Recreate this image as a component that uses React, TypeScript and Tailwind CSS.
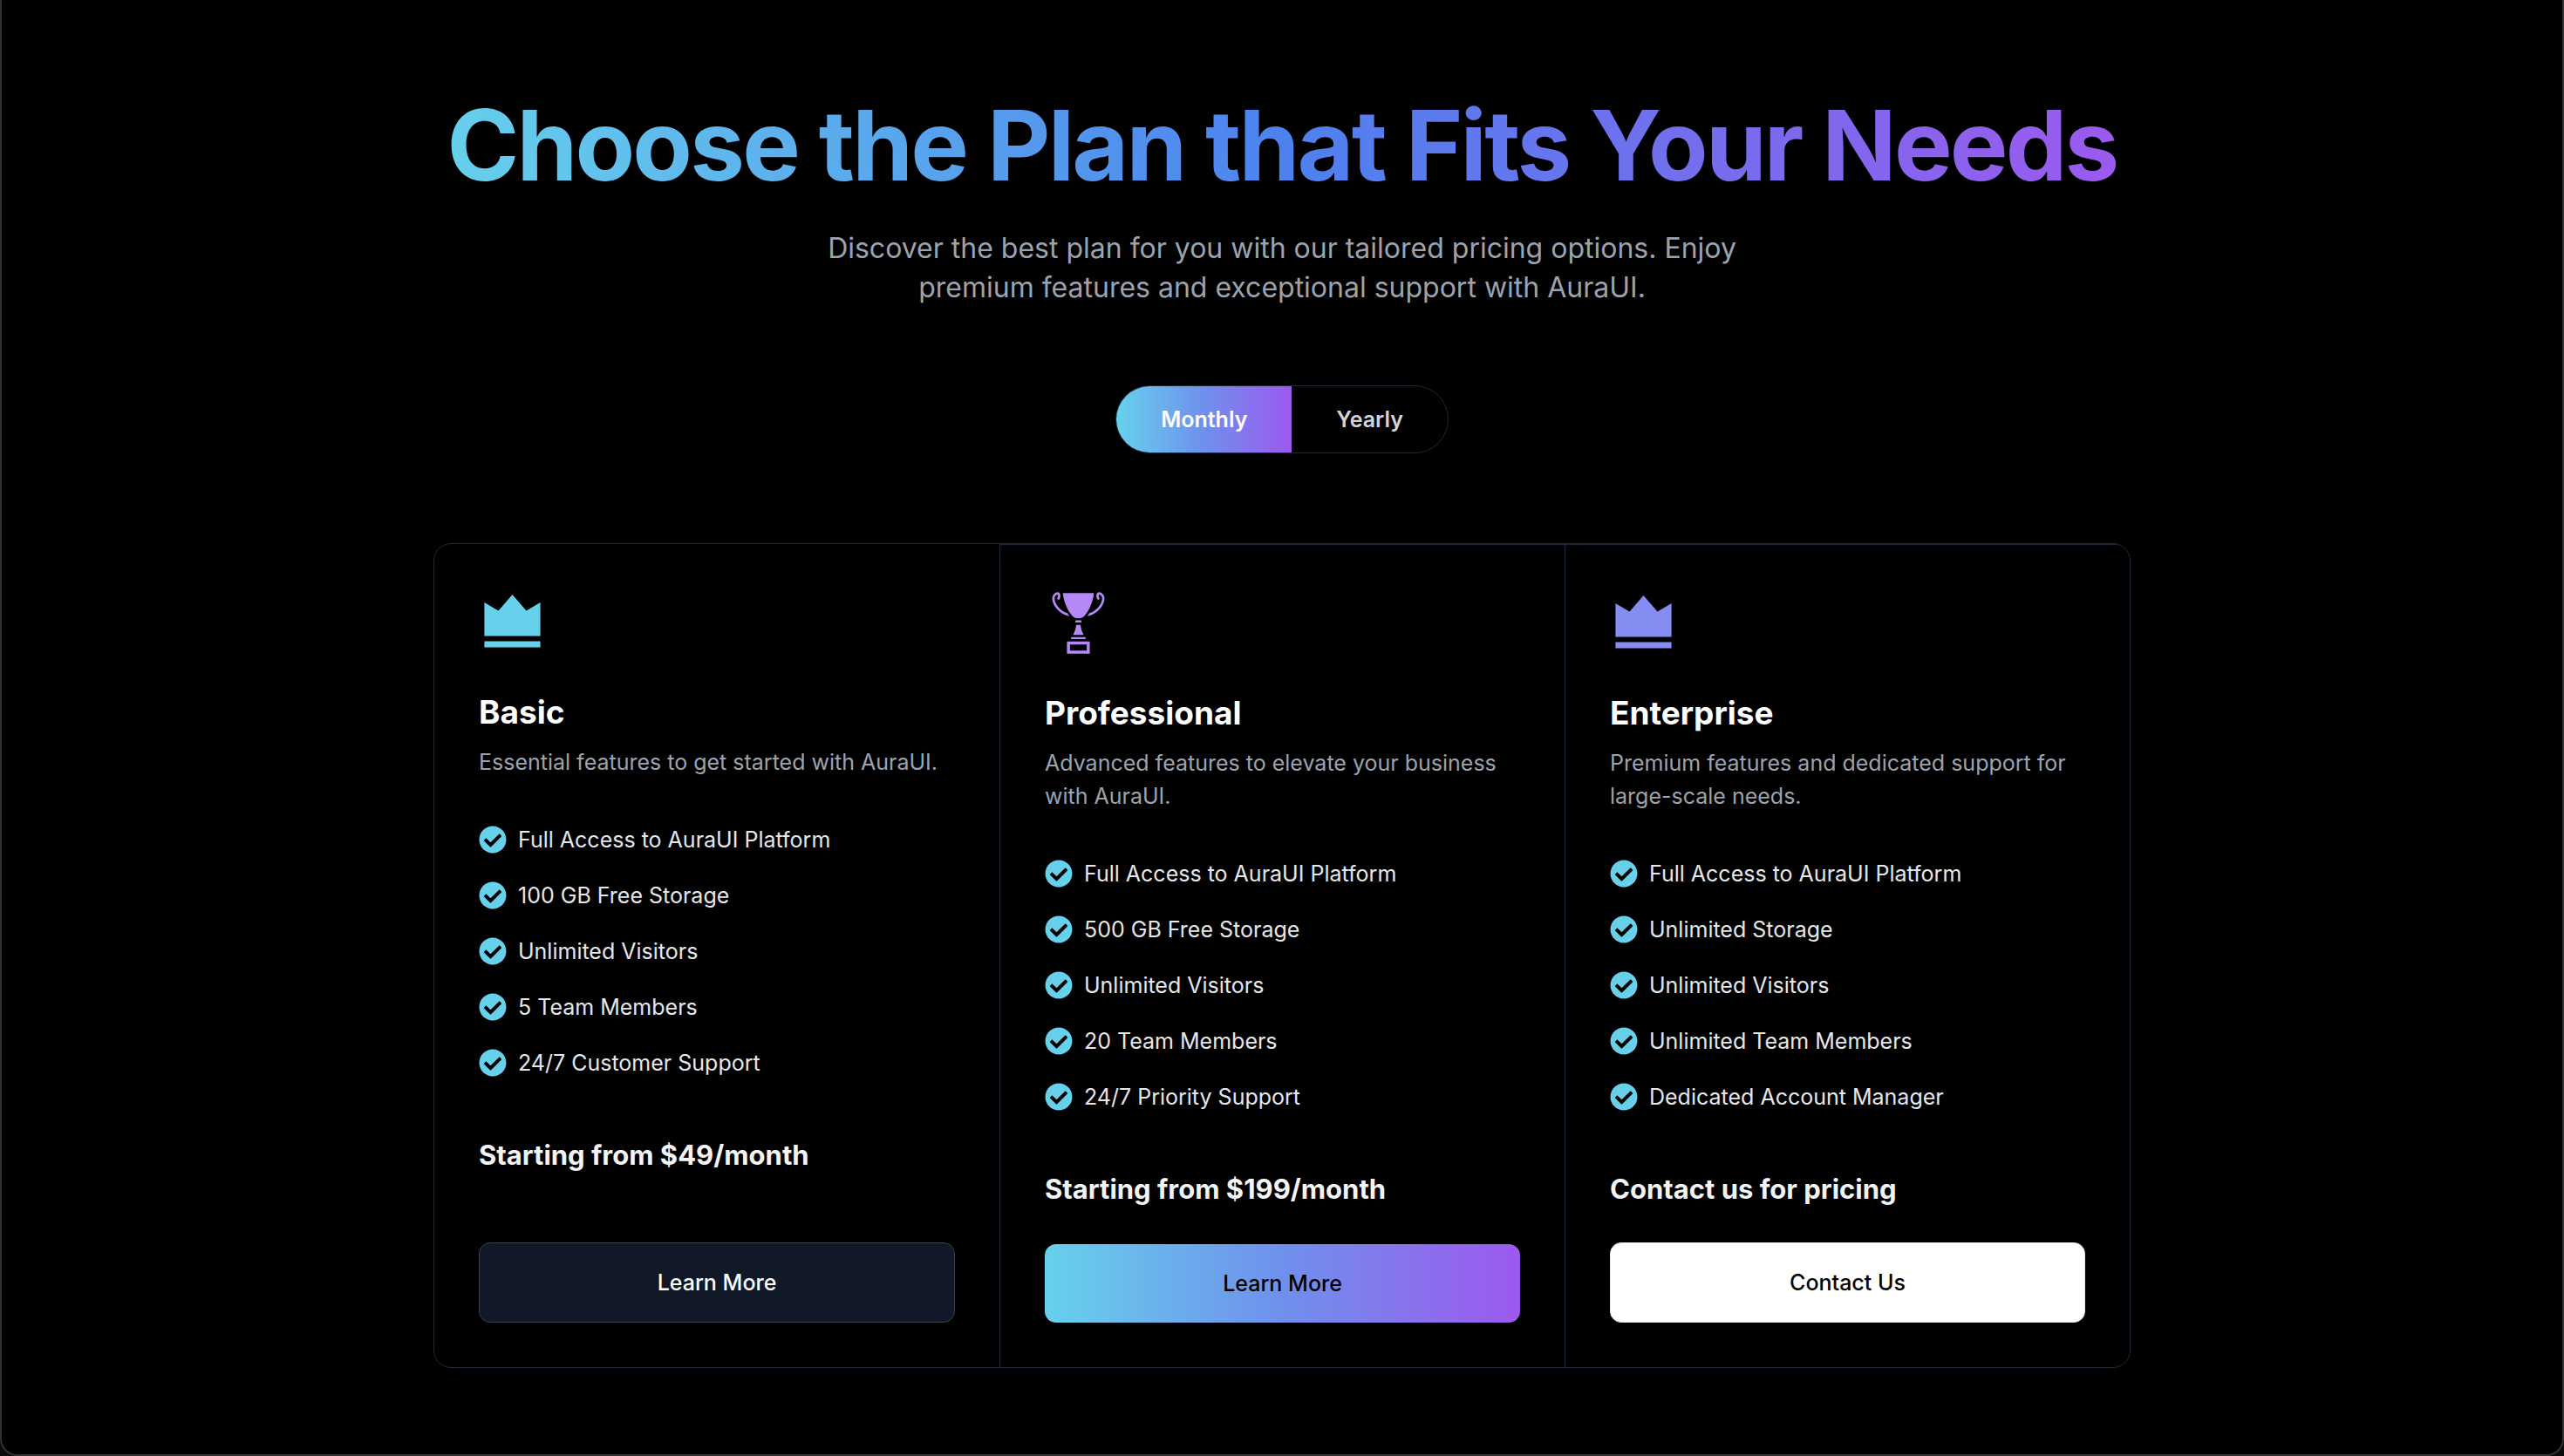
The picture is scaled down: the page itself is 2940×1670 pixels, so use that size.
import { useState, type ReactNode } from "react";
import { GiTrophyCup } from "react-icons/gi";
import { FaCheckCircle } from "react-icons/fa";

function Crown({ className }: { className: string }) {
  return (
    <svg viewBox="0 0 77 77" className={className} fill="currentColor" aria-hidden="true">
      <path d="M6.4 16 L22.5 25.5 L38.5 7 L54.5 25.5 L70.6 16 V54.5 H6.4 Z M6.4 60.5 H70.6 V67.5 H6.4 Z" />
    </svg>
  );
}

type Plan = {
  name: string;
  icon: ReactNode;
  description: string;
  features: string[];
  price: string;
  action: string;
  card: string;
  button: string;
};

const plans: Plan[] = [
  {
    name: "Basic",
    icon: <Crown className="size-[77px] text-[#67d1ec]" />,
    description: "Essential features to get started with AuraUI.",
    features: [
      "Full Access to AuraUI Platform",
      "100 GB Free Storage",
      "Unlimited Visitors",
      "5 Team Members",
      "24/7 Customer Support",
    ],
    price: "Starting from $49/month",
    action: "Learn More",
    card: "",
    button: "border border-[#374151] bg-[#111827] text-white",
  },
  {
    name: "Professional",
    icon: <GiTrophyCup className="size-[77px] text-[#b588f7]" />,
    description: "Advanced features to elevate your business with AuraUI.",
    features: [
      "Full Access to AuraUI Platform",
      "500 GB Free Storage",
      "Unlimited Visitors",
      "20 Team Members",
      "24/7 Priority Support",
    ],
    price: "Starting from $199/month",
    action: "Learn More",
    card: "border-t border-l border-[#1f2937]",
    button: "bg-linear-to-r/srgb from-[#67d1ec] via-[#6f90ec] to-[#9d59ee] text-black",
  },
  {
    name: "Enterprise",
    icon: <Crown className="size-[77px] text-[#858df2]" />,
    description: "Premium features and dedicated support for large-scale needs.",
    features: [
      "Full Access to AuraUI Platform",
      "Unlimited Storage",
      "Unlimited Visitors",
      "Unlimited Team Members",
      "Dedicated Account Manager",
    ],
    price: "Contact us for pricing",
    action: "Contact Us",
    card: "border-t border-l border-[#1f2937]",
    button: "border border-[#e5e7eb] bg-white text-black",
  },
];

function PlanCard({ plan }: { plan: Plan }) {
  return (
    <article className={`flex flex-col p-[51px] ${plan.card}`}>
      {plan.icon}
      <h2 className="mt-[39px] text-[37px] leading-[52px] font-bold text-white">{plan.name}</h2>
      <p className="mt-[12px] text-[25px] leading-[38px] text-[#9ca3af]">{plan.description}</p>
      <ul className="mt-[51px] flex flex-col gap-[26px] text-[25px] leading-[38px] text-[#e5e7eb]">
        {plan.features.map((feature) => (
          <li key={feature} className="flex items-center gap-[13px]">
            <FaCheckCircle className="size-[32px] shrink-0 text-[#67d1ec]" aria-hidden="true" />
            {feature}
          </li>
        ))}
      </ul>
      <p className="mt-[64px] mb-[38px] text-[31px] leading-[46px] font-bold text-[#f3f4f6]">{plan.price}</p>
      <button type="button" className={`mt-auto rounded-[13px] py-[26px] text-[25px] leading-[38px] font-medium ${plan.button}`}>
        {plan.action}
      </button>
    </article>
  );
}

export default function App() {
  const [period, setPeriod] = useState("Monthly");
  return (
    <div className="min-h-screen bg-[#0b0b0b] font-['Inter',sans-serif]">
      <main className="flex min-h-screen flex-col items-center rounded-b-[20px] border-x-2 border-b-2 border-[#333333] bg-black px-8 pt-[102px] pb-[98px]">
        <h1 className="bg-linear-75/srgb from-[#67d1ec] via-[#4d82ee] to-[#9d59ee] bg-clip-text text-center text-[112px] leading-[128px] font-bold tracking-tight text-transparent">
          Choose the Plan that Fits Your Needs
        </h1>
        <p className="mt-[32px] max-w-[1075px] text-center text-[32px] leading-[45px] text-[#9ca3af]">
          Discover the best plan for you with our tailored pricing options. Enjoy premium features and exceptional
          support with AuraUI.
        </p>
        <div className="mt-[90px] flex overflow-hidden rounded-full border border-[#1f2937]">
          {["Monthly", "Yearly"].map((name) => (
            <button
              key={name}
              type="button"
              aria-pressed={period === name}
              onClick={() => setPeriod(name)}
              className={`px-[51px] py-[19px] text-[25px] leading-[38px] font-semibold ${
                period === name
                  ? "bg-linear-to-r/srgb from-[#67d1ec] via-[#6f90ec] to-[#9d59ee] text-white"
                  : "text-[#d1d5db]"
              }`}
            >
              {name}
            </button>
          ))}
        </div>
        <section className="mt-[103px] grid w-full max-w-[1946px] grid-cols-3 overflow-hidden rounded-[20px] border border-[#1f2937]">
          {plans.map((plan) => (
            <PlanCard key={plan.name} plan={plan} />
          ))}
        </section>
      </main>
    </div>
  );
}
